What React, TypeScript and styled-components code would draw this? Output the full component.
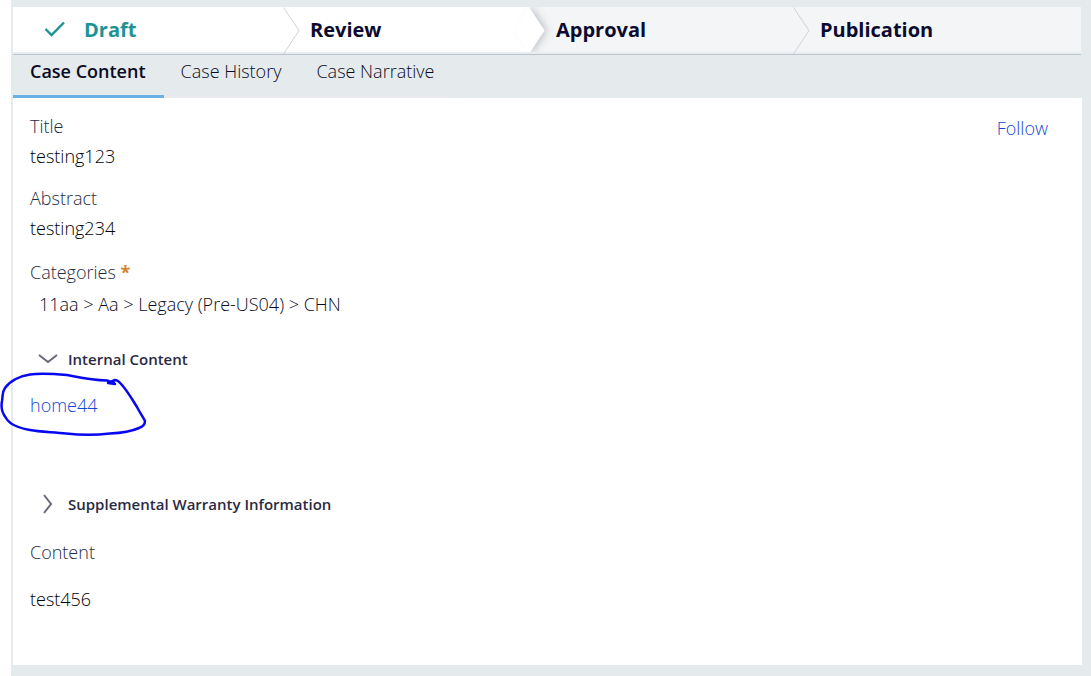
import React from "react";
import styled, { createGlobalStyle } from "styled-components";

const GlobalStyle = createGlobalStyle`
  * { box-sizing: border-box; }
  body {
    margin: 0;
    background: #ffffff;
    font-family: "Open Sans", "Noto Sans", sans-serif;
    font-size: 18px;
    font-weight: 300;
    line-height: 24px;
    color: #0b0b25;
  }
`;

const Page = styled.div`
  min-height: 100vh;
  margin-left: 11px;
  padding: 7px 9px 11px 2px;
  background: #e5eaec;
`;

const Stages = styled.ol`
  display: flex;
  margin: 0 1px 0 0;
  padding: 0;
  list-style: none;
  border-bottom: 1px solid #bcc5cf;
`;

const Stage = styled.li<{ $grow: number; $reached?: boolean; $done?: boolean }>`
  flex: ${(p) => p.$grow} 1 0;
  min-width: 0;
  height: 47px;
  display: flex;
  align-items: center;
  background: ${(p) => (p.$reached ? "#ffffff" : "#f3f5f7")};
  border-bottom: 2px solid #e9edf0;
  color: ${(p) => (p.$done ? "#1c9494" : "#0b0b30")};
  font-size: 20px;
  font-weight: 700;
`;

const StageDivider = styled.svg`
  flex: none;
  align-self: flex-start;
  width: 17px;
  height: 47px;
  margin-right: 10px;
  overflow: visible;
`;

const StageCheck = styled.svg`
  flex: none;
  width: 22px;
  height: 18px;
  margin: 0 18px 0 31px;
`;

const TabList = styled.div`
  display: flex;
`;

const Tab = styled.button<{ $active?: boolean }>`
  padding: 4px 18px 12px 17px;
  border: 0;
  border-bottom: 3px solid ${(p) => (p.$active ? "#6bb1e4" : "#e8eaed")};
  background: none;
  color: #0b0b25;
  font: inherit;
  font-weight: ${(p) => (p.$active ? 600 : 300)};
  white-space: nowrap;
`;

const Panel = styled.main`
  display: flex;
  justify-content: space-between;
  align-items: flex-start;
  padding: 16px 34px 36px 17px;
  background: #ffffff;
`;

const Details = styled.div`
  flex: 1;
  min-width: 0;
`;

const Fields = styled.dl`
  margin: 0;
`;

const Label = styled.dt`
  margin-bottom: 6px;
  color: #1f2c42;
`;

const Value = styled.dd`
  margin: 0 0 18px;
  color: #000000;
`;

const CategoryLabel = styled(Label)`
  margin: 20px 0 8px;
`;

const CategoryPath = styled(Value)`
  margin: 0 0 31px;
  padding-left: 9px;
  color: #0b0b25;
`;

const Required = styled.span`
  color: #d5842f;
  font-weight: 700;
`;

const SectionToggle = styled.button`
  display: flex;
  align-items: center;
  gap: 10px;
  padding: 0 0 0 8px;
  border: 0;
  background: none;
  color: #2a2a44;
  font: inherit;
  font-size: 15px;
  font-weight: 600;
  line-height: 24px;
`;

const Chevron = styled.svg`
  width: 20px;
  height: 20px;
`;

const Link = styled.a`
  color: #1548d0;
  text-decoration: none;
`;

const FollowLink = styled(Link)`
  margin-top: 2px;
`;

const SectionBody = styled.div`
  position: relative;
  margin: 22px 0 75px;
`;

const Ink = styled.svg`
  position: absolute;
  left: -30px;
  top: -21px;
  width: 150px;
  height: 66px;
  pointer-events: none;
`;

const ContentBlock = styled(Fields)`
  margin-top: 24px;
`;

const ContentLabel = styled(Label)`
  margin-bottom: 23px;
`;

function Divider({ raised }: { raised?: boolean }) {
  return (
    <StageDivider viewBox="0 0 17 47" aria-hidden="true">
      {raised ? (
        <>
          <defs>
            <filter id="stage-shadow" x="-100%" y="-20%" width="400%" height="140%">
              <feDropShadow dx="2" dy="0" stdDeviation="4" floodColor="#606878" floodOpacity="0.42" />
            </filter>
            <clipPath id="stage-clip">
              <rect x="-20" y="0" width="60" height="45" />
            </clipPath>
          </defs>
          <g clipPath="url(#stage-clip)">
            <path d="M0 0L15.500 23.500L0 47L-15.500 23.500Z" fill="#ffffff" filter="url(#stage-shadow)" />
            <path d="M0 0L-15.500 23.500L0 47H-20V0Z" fill="#ffffff" fillOpacity="0.9" />
          </g>
        </>
      ) : (
        <path d="M0.500 0.500L16 23.500L0.500 47" fill="none" stroke="#cfd2d9" />
      )}
    </StageDivider>
  );
}

export default function App() {
  return (
    <>
      <GlobalStyle />
      <Page>
        <Stages>
          <Stage $grow={270} $reached $done>
            <StageCheck viewBox="0 0 22 18" fill="none" stroke="currentColor" strokeWidth="2.4" aria-hidden="true">
              <path d="M1.500 8L7.500 14L20 1.500" />
            </StageCheck>
            Draft
          </Stage>
          <Stage $grow={246} $reached>
            <Divider />
            Review
          </Stage>
          <Stage $grow={264}>
            <Divider raised />
            Approval
          </Stage>
          <Stage $grow={288}>
            <Divider />
            Publication
          </Stage>
        </Stages>
        <TabList role="tablist">
          <Tab role="tab" aria-selected="true" $active>Case Content</Tab>
          <Tab role="tab" aria-selected="false">Case History</Tab>
          <Tab role="tab" aria-selected="false">Case Narrative</Tab>
        </TabList>
        <Panel>
          <Details>
            <Fields>
              <Label>Title</Label>
              <Value>testing123</Value>
              <Label>Abstract</Label>
              <Value>testing234</Value>
              <CategoryLabel>
                Categories <Required>*</Required>
              </CategoryLabel>
              <CategoryPath>11aa &gt; Aa &gt; Legacy (Pre-US04) &gt; CHN</CategoryPath>
            </Fields>
            <SectionToggle aria-expanded="true">
              <Chevron viewBox="0 0 20 20" fill="none" stroke="#686878" strokeWidth="2" aria-hidden="true">
                <path d="M1 6L10 13L19 6" />
              </Chevron>
              Internal Content
            </SectionToggle>
            <SectionBody>
              <Link href="#home44">home44</Link>
              <Ink viewBox="0 0 150 66" fill="none" stroke="#0808f0" strokeWidth="2.500" strokeLinecap="round" strokeLinejoin="round" aria-hidden="true">
                <path d="M115 12L108 11L115 8C118 8 120 11 122 13C128 20 132 27 137 35C140 41 143 45 145 49C145 53 142 55 139 56C130 60 122 61 110 61.500C97 63 80 63 66 61.500C54 60 40 60 30 58C18 56 10 53 6 46C2 41 1 34 2 29C3 23 2 20 5 16C10 9 20 4 30 2.500C40 1 56 2 67 3C78 5 90 8 107 8.500L114 11" />
              </Ink>
            </SectionBody>
            <SectionToggle aria-expanded="false">
              <Chevron viewBox="0 0 20 20" fill="none" stroke="#686878" strokeWidth="2" aria-hidden="true">
                <path d="M6 1L13 10L6 19" />
              </Chevron>
              Supplemental Warranty Information
            </SectionToggle>
            <ContentBlock>
              <ContentLabel>Content</ContentLabel>
              <Value>test456</Value>
            </ContentBlock>
          </Details>
          <FollowLink href="#follow">Follow</FollowLink>
        </Panel>
      </Page>
    </>
  );
}
